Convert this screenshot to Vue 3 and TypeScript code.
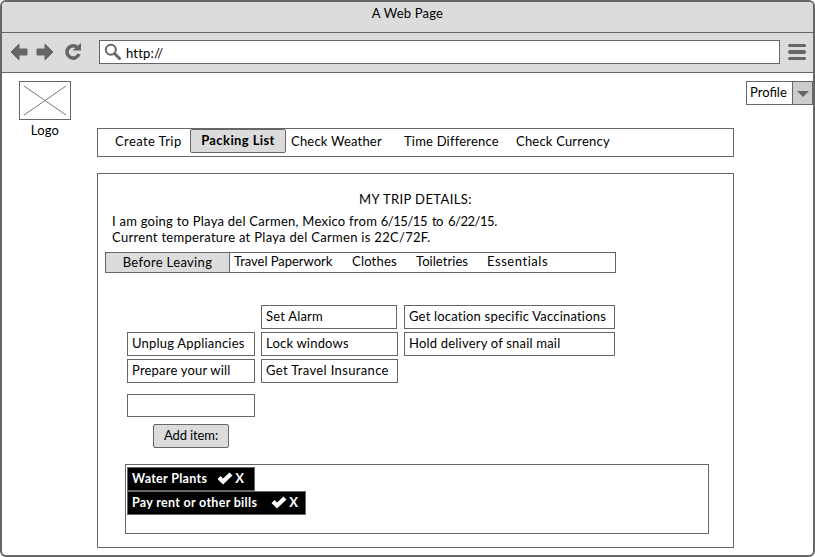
<script setup lang="ts">
const navItems = [
  { label: 'Create Trip', cls: 'n1' },
  { label: 'Packing List', cls: 'n2 active' },
  { label: 'Check Weather', cls: 'n3' },
  { label: 'Time Difference', cls: 'n4' },
  { label: 'Check Currency', cls: 'n5' },
]
const tabs = [
  { label: 'Travel Paperwork', cls: 't1' },
  { label: 'Clothes', cls: 't2' },
  { label: 'Toiletries', cls: 't3' },
  { label: 'Essentials', cls: 't4' },
]
const done = [
  { label: 'Water Plants', cls: 'd1' },
  { label: 'Pay rent or other bills', cls: 'd2' },
]
</script>

<template>
  <div class="window">
    <div class="titlebar">A Web Page</div>
    <div class="toolbar">
      <svg class="navicons" width="76" height="20" viewBox="0 0 76 20">
        <path d="M10 2 L2 10 L10 18 L10 13 L18 13 L18 7 L10 7 Z" fill="#666" stroke="#666" stroke-linejoin="round" />
        <path d="M36 2 L44 10 L36 18 L36 13 L28 13 L28 7 L36 7 Z" fill="#666" stroke="#666" stroke-linejoin="round" />
        <path d="M69 6 A6.2 6.2 0 1 0 70 12" fill="none" stroke="#666" stroke-width="3.6" />
        <path d="M63.5 8.5 L72 8.5 L72 1 Z" fill="#666" />
      </svg>
      <div class="url">
        <svg width="17" height="18" viewBox="0 0 17 18">
          <circle cx="6.8" cy="6.8" r="5" fill="none" stroke="#666" stroke-width="2" />
          <path d="M10.5 10.5 L15.5 15.5" stroke="#666" stroke-width="3" stroke-linecap="round" />
        </svg>
        <span class="urltext">http://</span>
      </div>
      <div class="burger"><i></i><i></i><i></i></div>
    </div>
    <div class="page">
      <div class="top">
        <div class="logo">
          <svg class="logobox" width="52" height="39" viewBox="0 0 52 39">
            <rect x="0.5" y="0.5" width="51" height="38" fill="#fff" stroke="#666" />
            <path d="M5 5 L47 34 M47 5 L5 34" stroke="#777" stroke-width="1" />
          </svg>
          <span>Logo</span>
        </div>
        <div class="profile">
          <span class="plabel">Profile</span>
          <span class="parrow"><b></b></span>
        </div>
      </div>
      <nav class="nav">
        <span v-for="n in navItems" :key="n.label" :class="n.cls">{{ n.label }}</span>
      </nav>
      <section class="card">
        <h1>MY TRIP DETAILS:</h1>
        <p>I am going to Playa del Carmen, Mexico from <span class="dates">6/15/15 to 6/22/15.</span><br /><span class="temp">Current temperature at Playa del Carmen is 22C/72F.</span></p>
        <div class="tabs">
          <span class="tab-active">Before Leaving</span>
          <span v-for="t in tabs" :key="t.label" class="tab" :class="t.cls">{{ t.label }}</span>
        </div>
        <div class="grid">
          <span class="item c2 r1 w136">Set Alarm</span>
          <span class="item c3 r1">Get location specific Vaccinations</span>
          <span class="item c1 r2">Unplug Appliancies</span>
          <span class="item c2 r2">Lock windows</span>
          <span class="item c3 r2">Hold delivery of snail mail</span>
          <span class="item c1 r3">Prepare your will</span>
          <span class="item c2 r3 wide">Get Travel Insurance</span>
        </div>
        <div class="entry"></div>
        <div class="add">Add item:</div>
        <div class="donebox">
          <div v-for="d in done" :key="d.label" class="done" :class="d.cls">
            <span class="dlabel">{{ d.label }}</span>
            <svg width="16" height="13" viewBox="0 0 16 13"><path d="M0.5 7 L3.5 4 L6 6.5 L12.5 0.5 L15.5 3.5 L6 12.5 Z" fill="#fff" /></svg>
            <em>X</em>
          </div>
        </div>
      </section>
    </div>
  </div>
</template>

<style>
html, body { margin: 0; background: #fff; }
</style>

<style scoped>
.window {
  width: 815px;
  height: 557px;
  box-sizing: border-box;
  border: 2px solid #666;
  border-radius: 6px;
  background: #fff;
  overflow: hidden;
  font-family: Lato, "Noto Sans", sans-serif;
  font-size: 13px;
  color: #000;
  letter-spacing: 0.2px;
}
.titlebar {
  height: 31px;
  box-sizing: border-box;
  background: #dcdcdc;
  border-bottom: 1px solid #666;
  text-align: center;
  line-height: 23px;
}
.toolbar {
  height: 40px;
  box-sizing: border-box;
  background: #dcdcdc;
  border-bottom: 1px solid #666;
  display: flex;
  align-items: center;
  padding: 0 0 1px 7px;
}
.navicons { margin-right: 14px; }
.url {
  width: 681px;
  height: 24px;
  box-sizing: border-box;
  border: 1px solid #666;
  background: #fff;
  display: flex;
  align-items: center;
  padding-left: 4px;
  gap: 5px;
}
.urltext { line-height: 20px; padding-top: 1px; }
.burger { margin-left: 8px; width: 18px; display: flex; flex-direction: column; gap: 3px; }
.burger i { height: 3.5px; border-radius: 2px; background: #666; display: block; }
.page { padding: 0 0 0 95px; }
.top {
  height: 55px;
  margin-left: -95px;
  padding: 8px 0 0 17px;
  box-sizing: border-box;
  display: flex;
  justify-content: space-between;
  align-items: flex-start;
}
.logo { width: 52px; display: flex; flex-direction: column; align-items: center; line-height: 20px; }
.logobox { display: block; }
.profile { display: flex; width: 67px; height: 24px; box-sizing: border-box; border: 1px solid #666; }
.plabel { flex: 1; padding-left: 3px; line-height: 20px; letter-spacing: 0; }
.parrow { width: 19px; background: #ccc; border-left: 1px solid #666; display: flex; align-items: center; justify-content: center; }
.parrow b { width: 0; height: 0; border: 6px solid transparent; border-top: 6px solid #666; border-bottom: 0; margin-top: 2px; }
.nav {
  width: 637px;
  height: 29px;
  box-sizing: border-box;
  border: 1px solid #666;
  display: flex;
  line-height: 25px;
  letter-spacing: 0.2px;
}
.n1 { margin-left: 17px; width: 75px; letter-spacing: 0.4px; }
.n2 { width: 96px; }
.n3 { margin-left: 5px; width: 113px; }
.n4 { width: 112px; }
.n5 { width: 110px; }
.active {
  height: 24px;
  box-sizing: border-box;
  background: #dcdcdc;
  border: 1px solid #666;
  border-radius: 2px;
  text-align: center;
  font-weight: 700;
  line-height: 21px;
  letter-spacing: 0.4px;
}
.card {
  width: 637px;
  height: 375px;
  box-sizing: border-box;
  margin-top: 16px;
  border: 1px solid #666;
  padding: 0 0 0 7px;
}
h1 { margin: 16px 0 0 -7px; font: inherit; text-align: center; line-height: 18px; letter-spacing: 0.4px; }
p { margin: 5px 0 0 7px; line-height: 16px; letter-spacing: 0.25px; }
.dates { letter-spacing: -0.45px; word-spacing: 2px; }
.temp { letter-spacing: 0.3px; }
.tabs {
  width: 511px;
  height: 21px;
  box-sizing: border-box;
  margin-top: 7px;
  border: 1px solid #666;
  display: flex;
}
.tab-active {
  width: 125px;
  margin: -1px 0 -1px -1px;
  box-sizing: border-box;
  background: #dcdcdc;
  border: 1px solid #666;
  border-radius: 2px 0 0 2px;
  text-align: center;
  line-height: 19px;
  letter-spacing: 0.35px;
}
.tab { padding-left: 4px; box-sizing: border-box; line-height: 16px; white-space: nowrap; }
.t1 { width: 118px; letter-spacing: -0.03px; }
.t2 { width: 64px; letter-spacing: 0.2px; }
.t3 { width: 71px; letter-spacing: 0.05px; }
.t4 { width: 80px; letter-spacing: 0.55px; }
.grid {
  margin: 32px 0 0 22px;
  display: grid;
  grid-template-columns: 128px 137px 211px;
  grid-template-rows: repeat(3, 24px);
  column-gap: 6px;
  row-gap: 3px;
}
.item { border: 1px solid #666; box-sizing: border-box; padding-left: 4px; line-height: 20px; white-space: nowrap; }
.wide { letter-spacing: 0.35px; }
.c1 { grid-column: 1; } .c2 { grid-column: 2; } .c3 { grid-column: 3; }
.r1 { grid-row: 1; } .r2 { grid-row: 2; } .r3 { grid-row: 3; }
.w136 { width: 136px; }
.entry { width: 128px; height: 23px; box-sizing: border-box; margin: 11px 0 0 22px; border: 1px solid #666; }
.add {
  width: 76px; height: 24px; box-sizing: border-box; margin: 7px 0 0 48px;
  background: #dcdcdc; border: 1px solid #666; border-radius: 2px; text-align: center; line-height: 21px;
  letter-spacing: -0.1px;
}
.donebox {
  width: 584px; height: 70px; box-sizing: border-box; margin: 16px 0 0 20px;
  border: 1px solid #666; padding: 2px 0 0 1px;
}
.done {
  height: 24px;
  box-sizing: border-box;
  background: #000;
  color: #fff;
  border: 1px solid #666;
  display: flex;
  align-items: center;
  padding: 0 0 2px 4px;
  white-space: nowrap;
  font-weight: 700;
  font-size: 12.5px;
  letter-spacing: 0.3px;
}
.d1 { width: 128px; }
.d2 { width: 179px; }
.d1 .dlabel { margin-right: 10px; }
.d2 .dlabel { margin-right: 14px; }
.done svg { margin-right: 2px; }
.done em { font-style: normal; font-size: 13px; }
</style>
